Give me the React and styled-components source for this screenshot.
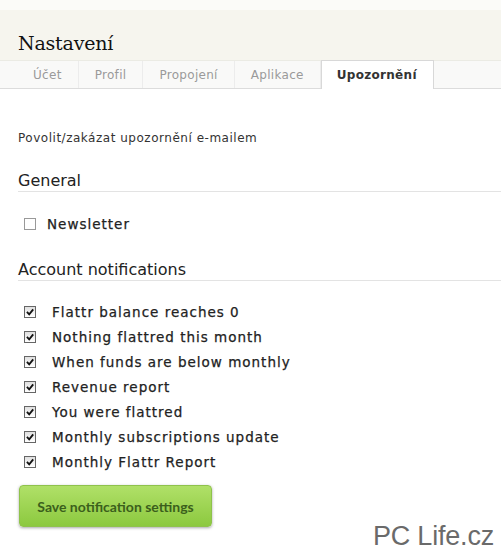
import React from 'react';
import styled, { createGlobalStyle } from 'styled-components';

const GlobalStyle = createGlobalStyle`
  body {
    margin: 0;
    background: #ffffff;
    font-family: "DejaVu Sans", sans-serif;
  }
`;

const Page = styled.div`
  position: relative;
  width: 501px;
  height: 557px;
  overflow: hidden;
  background: #ffffff;
`;

const Header = styled.div`
  background: #f6f5ee;
  border-top: 10px solid #fbfbf8;
  height: 60px;
  box-sizing: border-box;
  padding: 21px 0 0 18px;
`;

const Title = styled.h1`
  margin: 0;
  font-family: "DejaVu Serif", serif;
  font-size: 19px;
  line-height: 24px;
  font-weight: normal;
  color: #111;
  letter-spacing: -0.2px;
`;

const TabBar = styled.div`
  display: flex;
  height: 27px;
  padding-left: 17px;
  background: #f9f9f8;
  border-top: 1px solid #ebebe4;
  border-bottom: 1px solid #dcdcdc;
`;

const Tab = styled.div`
  display: flex;
  align-items: center;
  padding: 0 16px 0 ${p => (p.$active ? 15 : 16)}px;
  font-size: 12px;
  letter-spacing: 0.3px;
  color: ${p => (p.$active ? '#333' : '#9a9a9a')};
  font-weight: ${p => (p.$active ? 'bold' : 'normal')};
  background: ${p => (p.$active ? '#ffffff' : 'transparent')};
  border-right: 1px solid ${p => (p.$active ? '#d8d8d8' : '#ececec')};
  border-left: ${p => (p.$active ? '1px solid #d8d8d8' : 'none')};
  margin-top: ${p => (p.$active ? '-1px' : '0')};
  border-top: ${p => (p.$active ? '1px solid #d8d8d8' : 'none')};
  margin-bottom: ${p => (p.$active ? '-1px' : '0')};
`;

const Content = styled.div`
  padding: 42px 0 0 18px;
`;

const Intro = styled.p`
  margin: 0 0 26px;
  font-size: 12px;
  line-height: 15px;
  letter-spacing: 0.52px;
  color: #333;
`;

const SectionTitle = styled.h2`
  margin: 0 0 ${p => p.$after}px;
  padding-bottom: 1px;
  font-family: "DejaVu Sans", sans-serif;
  font-size: 16px;
  line-height: 18px;
  font-weight: normal;
  color: #222;
  border-bottom: 1px solid #e3e3e3;
`;

const List = styled.div`
  display: flex;
  flex-direction: column;
  margin-bottom: ${p => p.$gap}px;
`;

const Row = styled.label`
  display: flex;
  align-items: center;
  height: 25px;
  padding-left: 6px;
  font-size: 13.5px;
  letter-spacing: 1px;
  color: #222;
  -webkit-text-stroke: 0.25px #222;
`;

const Box = styled.span`
  width: 12px;
  height: 12px;
  box-sizing: border-box;
  margin-right: ${p => p.$space}px;
  border: 1px solid ${p => (p.$checked ? '#666' : '#999')};
  background: ${p => (p.$checked ? 'linear-gradient(#e0e0e0, #fff)' : '#fff')};
  display: flex;
  align-items: center;
  justify-content: center;
  flex-shrink: 0;
`;

const SaveButton = styled.button`
  margin-left: 1px;
  width: 193px;
  height: 42px;
  border: 1px solid #8fc24c;
  border-radius: 4px;
  background: linear-gradient(#b0e068, #8cc93f);
  box-shadow: 0 1px 3px rgba(0, 0, 0, 0.35);
  font-family: Lato, sans-serif;
  font-weight: bold;
  font-size: 14px;
  color: #3b5f1c;
  cursor: pointer;
`;

const Watermark = styled.div`
  position: absolute;
  right: 7px;
  bottom: 5px;
  font-family: "Liberation Sans", sans-serif;
  font-size: 27px;
  color: #6a6a6a;
  letter-spacing: -0.2px;
`;

const Check = () => (
  <svg width="8" height="8" viewBox="0 0 7 7">
    <path d="M0.8 3.4 L2.8 5.6 L6.3 1.2" stroke="#111" strokeWidth="1.6" fill="none" />
  </svg>
);

const tabs = ['Účet', 'Profil', 'Propojení', 'Aplikace', 'Upozornění'];

const notifications = [
  'Flattr balance reaches 0',
  'Nothing flattred this month',
  'When funds are below monthly',
  'Revenue report',
  'You were flattred',
  'Monthly subscriptions update',
  'Monthly Flattr Report',
];

const App = () => (
  <Page>
    <GlobalStyle />
    <Header>
      <Title>Nastavení</Title>
    </Header>
    <TabBar>
      {tabs.map(t => (
        <Tab key={t} $active={t === 'Upozornění'}>{t}</Tab>
      ))}
    </TabBar>
    <Content>
      <Intro>Povolit/zakázat upozornění e-mailem</Intro>
      <SectionTitle $after={19}>General</SectionTitle>
      <List $gap={25}>
        <Row>
          <Box $space={11} />
          Newsletter
        </Row>
      </List>
      <SectionTitle $after={18}>Account notifications</SectionTitle>
      <List $gap={11}>
        {notifications.map(n => (
          <Row key={n}>
            <Box $checked $space={16}><Check /></Box>
            {n}
          </Row>
        ))}
      </List>
      <SaveButton>Save notification settings</SaveButton>
    </Content>
    <Watermark>PC Life.cz</Watermark>
  </Page>
);

export default App;
